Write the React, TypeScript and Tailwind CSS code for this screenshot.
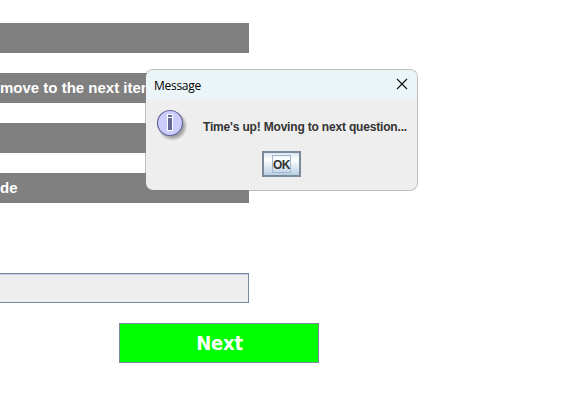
const options = ["", "move to the next item", "", "de"];

function InfoIcon() {
  return (
    <svg width="36" height="36" viewBox="0 0 36 36" className="block">
      <defs>
        <radialGradient id="shadow">
          <stop offset="0.72" stopColor="#8a8a8a" stopOpacity="0.75" />
          <stop offset="1" stopColor="#8a8a8a" stopOpacity="0" />
        </radialGradient>
      </defs>
      <circle cx="17.5" cy="18" r="15" fill="url(#shadow)" />
      <circle cx="15" cy="15" r="12.5" fill="#ccccff" stroke="#666699" strokeWidth="1.2" />
      <path d="M12 6h6v17h-6z" fill="#fff" />
      <path d="M13 7h4v2h-4zM13 10h4v12h-4z" fill="#666699" />
    </svg>
  );
}

function MessageDialog() {
  return (
    <div className="absolute left-[145px] top-[69px] flex h-[122px] w-[273px] flex-col overflow-hidden rounded-lg border border-[#808080]/50 bg-[#eeeeee] bg-clip-padding">
      <div className="flex h-[30px] shrink-0 items-center justify-between bg-[#ebf4f7] pl-2 pr-[9px]">
        <span className="pt-px font-['Open_Sans','Noto_Sans',sans-serif] text-[12px] leading-4 tracking-[-0.28px] text-black">Message</span>
        <svg width="12" height="12" viewBox="0 0 12 12" className="-mt-0.5">
          <path d="M1 1l10 10M11 1L1 11" stroke="#111" strokeWidth="1.1" />
        </svg>
      </div>
      <div className="flex pl-[9px] pt-2">
        <InfoIcon />
        <span className="whitespace-nowrap pl-3 pt-[11px] text-[12px] font-bold leading-4 tracking-[-0.18px] text-[#333]">Time's up! Moving to next question...</span>
      </div>
      <button className="ml-[116px] mt-[7px] flex h-[26px] w-[39px] shrink-0 items-center justify-center border-2 border-[#7a8a99] bg-linear-to-b from-[#dde8f3] via-white via-30% to-[#b8cfe5]">
        <span className="flex h-[18px] w-[19px] items-center justify-center border border-[#a3b8cc] pt-px text-[12px] font-bold tracking-[-0.5px] text-[#333]">OK</span>
      </button>
    </div>
  );
}

export default function App() {
  return (
    <main className="relative h-[401px] w-[580px] overflow-hidden bg-white pt-[23px] font-['Liberation_Sans',Arial,sans-serif]">
      <div className="flex w-[249px] flex-col gap-5">
        {options.map((label, i) => (
          <div key={i} className="flex h-[30px] items-center whitespace-nowrap bg-[#808080] text-[15px] font-bold text-white">
            {label}
          </div>
        ))}
      </div>
      <div className="mt-[70px] h-[30px] w-[249px] border border-l-0 border-[#7a8a99] bg-[#eeeeee] shadow-[inset_0_1px_0_#b8cfe5]" />
      <button className="ml-[119px] mt-5 flex h-10 w-[200px] items-center justify-center border border-[#7a8a99] bg-[#00ff00] pl-px font-['DejaVu_Sans_Condensed','DejaVu_Sans',sans-serif] text-[20px] font-bold tracking-[-0.2px] text-white">
        Next
      </button>
      <MessageDialog />
    </main>
  );
}
